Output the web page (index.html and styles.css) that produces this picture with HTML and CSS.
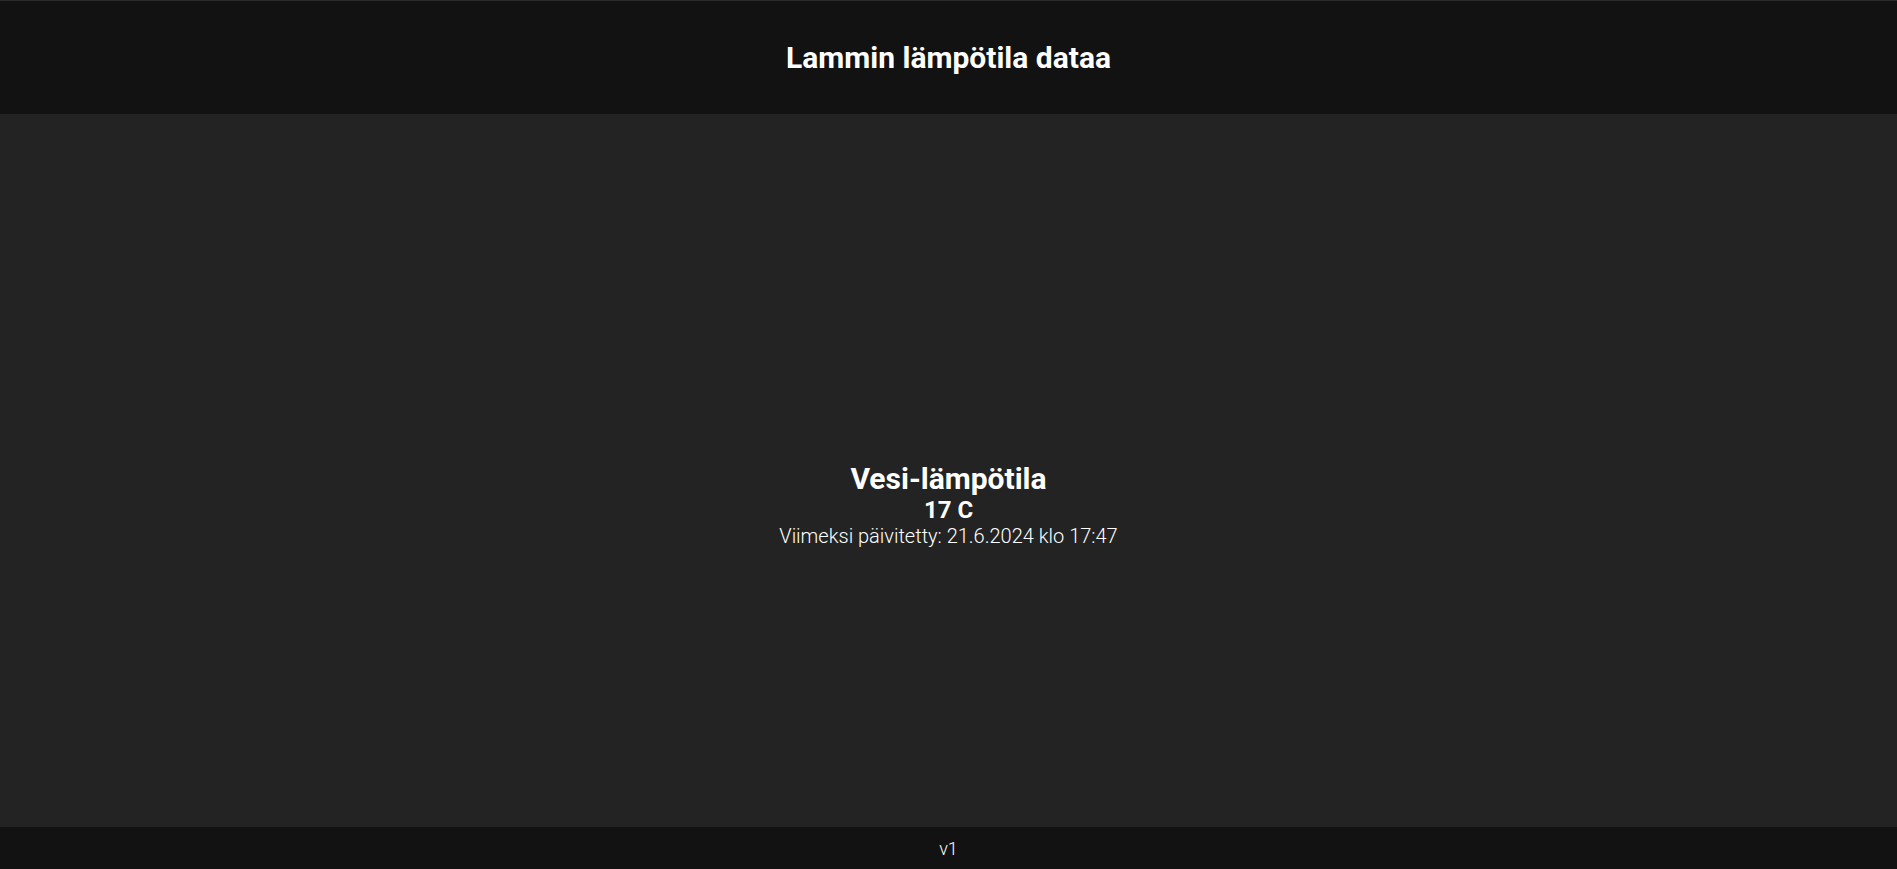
FILE: index.html
```html
<!DOCTYPE html>
<html lang="fi">
<head>
<meta charset="utf-8">
<title>Lammin lämpötila dataa</title>
<link rel="stylesheet" href="styles.css">
</head>
<body>
<div class="page">
  <header class="header">
    <h1 class="title">Lammin lämpötila dataa</h1>
  </header>
  <main class="main">
    <div class="reading">
      <h2 class="reading-name">Vesi-lämpötila</h2>
      <div class="reading-value">17 C</div>
      <div class="reading-time">Viimeksi päivitetty: 21.6.2024 klo 17:47</div>
    </div>
  </main>
  <footer class="footer">v1</footer>
</div>
</body>
</html>
```
FILE: styles.css
```css
html, body {
  margin: 0;
  padding: 0;
  height: 100%;
}
body {
  background: #232323;
  color: #ffffff;
  font-family: Roboto, "Liberation Sans", sans-serif;
}
.page {
  display: flex;
  flex-direction: column;
  height: 100vh;
}
.header {
  background: #121212;
  border-top: 1px solid #2a2a2a;
  height: 113px;
  display: flex;
  align-items: center;
  justify-content: center;
}
.title {
  margin: 0;
  font-size: 30px;
  font-weight: 700;
}
.main {
  flex: 1;
  display: flex;
  align-items: center;
  justify-content: center;
  padding-top: 67px;
}
.reading {
  text-align: center;
}
.reading-name {
  margin: 0;
  font-size: 30px;
  font-weight: 700;
  line-height: 35px;
}
.reading-value {
  font-size: 24px;
  font-weight: 700;
  line-height: 28px;
}
.reading-time {
  font-size: 20px;
  font-weight: 300;
  line-height: 24px;
}
.footer {
  background: #121212;
  height: 42px;
  display: flex;
  align-items: center;
  justify-content: center;
  font-size: 18px;
  font-weight: 300;
}
```
